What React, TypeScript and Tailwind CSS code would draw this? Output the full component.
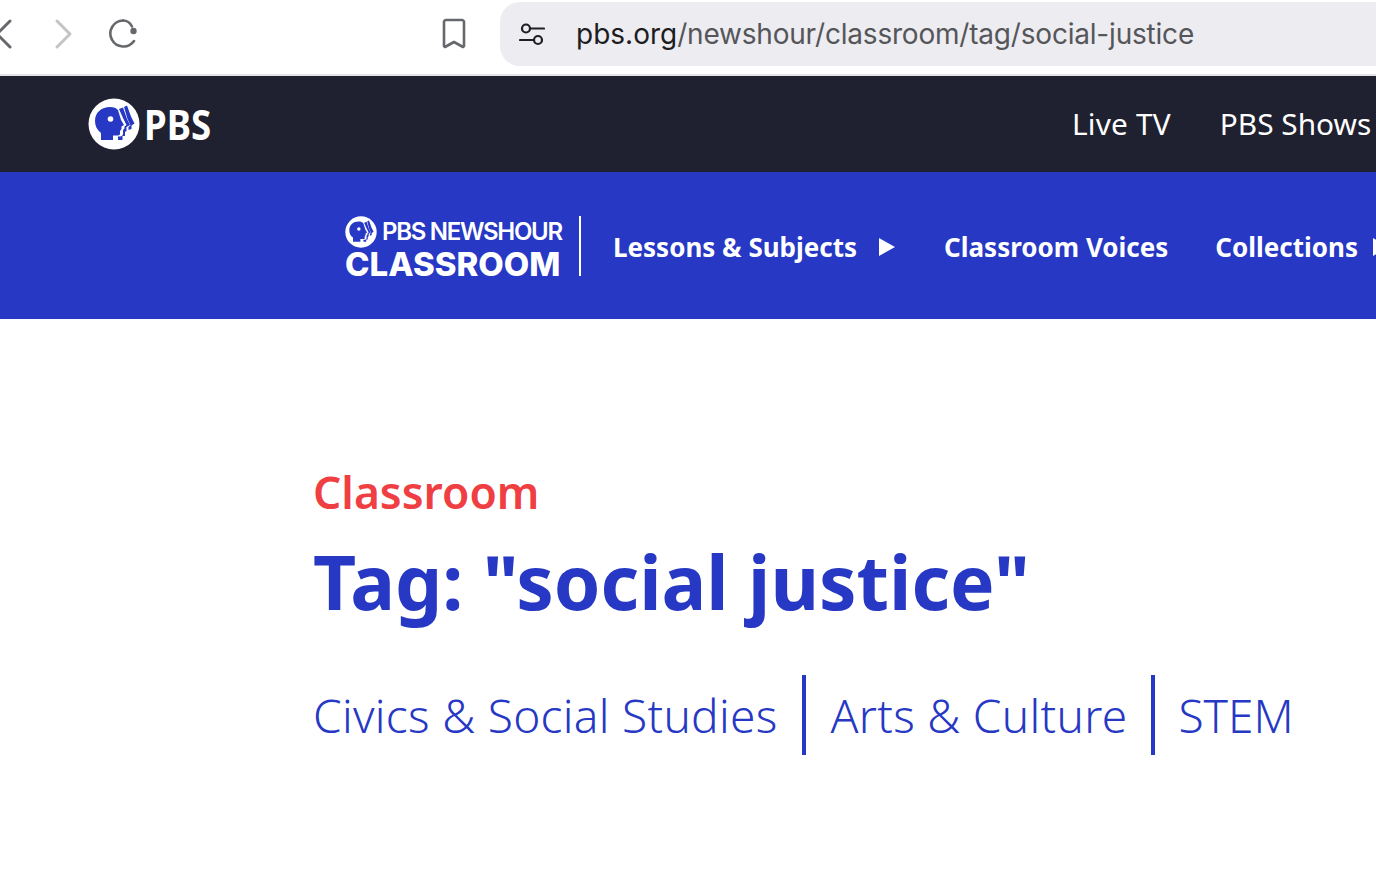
import React from 'react';

const PbsHead: React.FC<{ className?: string; head: string; bg: string }> = ({ className, head, bg }) => (
  <svg viewBox="0 0 52 52" className={className}>
    <circle cx="26" cy="26" r="25.5" fill={bg} />
    <path fill={head} d="M7 23C7 14 14 9 22 9c4 0 6 1 8 3l3 10 3 5-2.500 1.500V31L32 33v3c0 1-2 1.500-4 1.500h-3V42H13v-7c-4-3-6-7-6-12z" />
    <circle cx="22.500" cy="21" r="2.800" fill={bg} />
    <path fill={head} d="M31 11l4-1.500L39 21l3 6-3.500 2v4L37 34v4h-2.500v4H30v-3.500h2c1.500 0 3-1 3-2.500v-4l1.500-1.500V28.500L38.500 27 35 20z" />
    <path fill={head} d="M36 9l3-1.500 4 11 3.500 7-3 2v3.500l-3 1V29l2-1.500-3-6.500z" />
  </svg>
);

const App: React.FC = () => {
  return (
    <div className="w-[1376px] h-[878px] overflow-hidden bg-white font-['Noto_Sans',sans-serif]">
      {/* browser toolbar */}
      <div className="h-[76px] border-b-2 border-[#e4e4e6] flex items-center relative">
        <div className="w-[500px] shrink-0 h-full relative">
          <svg viewBox="0 0 20 32" className="absolute left-[-6px] top-[18px] w-5 h-[32px]" fill="none" stroke="#66686c" strokeWidth="3" strokeLinecap="round" strokeLinejoin="round">
            <path d="M16 3 3 16l13 13" />
          </svg>
          <svg viewBox="0 0 20 32" className="absolute left-[54px] top-[18px] w-5 h-[32px]" fill="none" stroke="#c4c4c6" strokeWidth="3" strokeLinecap="round" strokeLinejoin="round">
            <path d="M3 3l13 13L3 29" />
          </svg>
          <svg viewBox="0 0 32 32" className="absolute left-[108px] top-[17px] w-8 h-8" fill="none" stroke="#66686c" strokeWidth="2.600" strokeLinecap="round">
            <path d="M15 3.500A13 13 0 1 0 26 24" />
            <path d="M15 3.500c4 0 7 2 9 6" />
            <circle cx="25.500" cy="14" r="3.200" fill="#66686c" stroke="none" />
          </svg>
          <svg viewBox="0 0 24 32" className="absolute left-[442px] top-[18px] w-6 h-8" fill="none" stroke="#66686c" strokeWidth="2.600" strokeLinejoin="round">
            <path d="M2 4c0-1 1-2 2-2h16c1 0 2 1 2 2v24l-1 1-9-5-9 5-1-1z" />
          </svg>
        </div>
        <div className="flex-1 h-[64px] bg-[#edecf1] rounded-l-[20px] flex items-center pl-[19px] self-start mt-[2px]">
          <svg viewBox="0 0 26 26" className="w-[26px] h-[26px]" fill="none" stroke="#1f2023" strokeWidth="2.200" strokeLinecap="round">
            <circle cx="7" cy="7.500" r="4" />
            <path d="M11 7.500h14M1 19h14" />
            <circle cx="19" cy="19" r="4" />
          </svg>
          <span className="ml-[31px] text-[28px] leading-none font-['Inter',sans-serif] text-[#55565a] whitespace-nowrap">
            <span className="text-[#1d1d1f]">pbs.org</span>
            <span className="tracking-[-0.2px]">/newshour/classroom/tag/social-justice</span>
          </span>
        </div>
      </div>

      {/* PBS bar */}
      <div className="h-[96px] bg-[#1f2130] flex items-center pl-[88px] text-white whitespace-nowrap">
        <div className="flex items-center gap-[4px] w-[984px] shrink-0">
          <PbsHead className="w-[52px] h-[52px]" head="#2638c4" bg="#ffffff" />
          <span className="text-[42px] leading-none font-bold scale-x-[.87] origin-left">PBS</span>
        </div>
        <span className="text-[29.8px] font-normal tracking-[.2px]">Live TV</span>
        <span className="text-[29.8px] font-normal ml-[49px]">PBS Shows</span>
      </div>

      {/* blue nav */}
      <div className="h-[147px] bg-[#2638c4] flex items-center pl-[345px] text-white whitespace-nowrap">
        <div className="w-[236px] shrink-0 h-[60px] border-r-2 border-white flex flex-col">
          <div className="flex items-center gap-[5px] h-[32px]">
            <PbsHead className="w-[32px] h-[32px]" head="#2638c4" bg="#ffffff" />
            <span className="text-[24px] leading-none font-semibold tracking-[-1.3px] font-['Inter',sans-serif]">PBS NEWSHOUR</span>
          </div>
          <span className="mt-[2px] text-[33px] leading-[28px] font-extrabold font-['Inter',sans-serif]">CLASSROOM</span>
        </div>
        <span className="ml-[32px] pt-[3px] text-[26px] font-bold">Lessons &amp; Subjects</span>
        <svg viewBox="0 0 18 18" className="ml-[21px] mt-[3px] w-[18px] h-[18px] shrink-0" fill="#ffffff"><path d="M1 0l16 9-16 9z" /></svg>
        <span className="ml-[48px] pt-[3px] text-[26px] font-bold shrink-0">Classroom Voices</span>
        <span className="ml-[47px] pt-[3px] text-[26px] font-bold shrink-0">Collections</span>
        <svg viewBox="0 0 18 18" className="ml-[15px] mt-[3px] w-[18px] h-[18px] shrink-0" fill="#ffffff"><path d="M0 0l16 9-16 9z" /></svg>
      </div>

      {/* page heading */}
      <div className="pl-[313px] pt-[144px] whitespace-nowrap">
        <div className="text-[44.4px] leading-[58px] font-semibold text-[#ef3f42]">Classroom</div>
        <h1 className="mt-[14px] text-[74.8px] leading-[92px] font-bold text-[#2638c4]">Tag: "social justice"</h1>
        <div className="mt-[48px] flex items-center text-[46px] tracking-[.3px] font-light text-[#2638c4]">
          <span>Civics &amp; Social Studies</span>
          <span className="ml-[24px] mr-[25px] w-[4px] h-[80px] bg-[#2638c4]" />
          <span>Arts &amp; Culture</span>
          <span className="ml-[24px] mr-[23px] w-[4px] h-[80px] bg-[#2638c4]" />
          <span className="tracking-[0px]">STEM</span>
        </div>
      </div>
    </div>
  );
};

export default App;
